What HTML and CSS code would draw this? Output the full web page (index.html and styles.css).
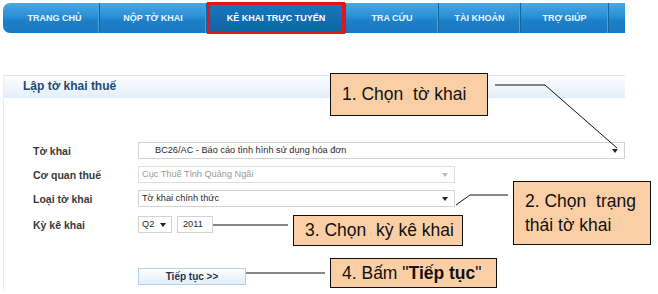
FILE: index.html
```html
<!DOCTYPE html>
<html lang="vi">
<head>
    <meta charset="UTF-8">
    <title>Kê khai trực tuyến</title>
    <link rel="stylesheet" href="styles.css">
</head>
<body>
    <nav class="menu">
        <a class="menu-item home">TRANG CHỦ</a>
        <a class="menu-item submit">NỘP TỜ KHAI</a>
        <a class="menu-item online active">KÊ KHAI TRỰC TUYẾN</a>
        <a class="menu-item search">TRA CỨU</a>
        <a class="menu-item account">TÀI KHOẢN</a>
        <a class="menu-item help">TRỢ GIÚP</a>
        <a class="menu-item tail"></a>
    </nav>

    <section class="panel">
        <h2 class="panel-title">Lập tờ khai thuế</h2>
        <div class="form">
            <div class="row">
                <label>Tờ khai</label>
                <div class="select wide indent">BC26/AC - Báo cáo tình hình sử dụng hóa đơn<span class="arrow"></span></div>
            </div>
            <div class="row">
                <label>Cơ quan thuế</label>
                <div class="select mid disabled">Cục Thuế Tỉnh Quảng Ngãi<span class="arrow"></span></div>
            </div>
            <div class="row">
                <label>Loại tờ khai</label>
                <div class="select mid">Tờ khai chính thức<span class="arrow"></span></div>
            </div>
            <div class="row period">
                <label>Kỳ kê khai</label>
                <div class="select quarter">Q2<span class="arrow"></span></div>
                <div class="year">2011</div>
            </div>
        </div>
        <div class="actions">
            <button class="btn">Tiếp tục &gt;&gt;</button>
        </div>
    </section>

    <!-- chu thich huong dan -->
    <svg class="links" width="658" height="294">
        <polyline points="495,85 545,85 617,148" />
        <polyline points="456,205 470,195 508,195" />
        <line x1="213" y1="225" x2="288" y2="225" />
        <line x1="246" y1="273" x2="325" y2="273" />
    </svg>
    <div class="note note-1">1. Chọn  tờ khai</div>
    <div class="note note-2">2. Chọn  trạng<br>thái tờ khai</div>
    <div class="note note-3">3. Chọn  kỳ kê khai</div>
    <div class="note note-4">4. Bấm "<b>Tiếp tục</b>"</div>
</body>
</html>
```

FILE: styles.css
```css
* {
    box-sizing: border-box;
}

body {
    margin: 0;
    width: 658px;
    height: 294px;
    position: relative;
    background: #fff;
    font-family: "Liberation Sans", Arial, sans-serif;
    overflow: hidden;
}

.menu {
    display: flex;
    margin: 3px 0 0 3px;
    width: 622px;
    height: 30px;
    border-radius: 7px 0 0 7px;
    background: linear-gradient(#4aa7e4, #2a8fd6 45%, #1d7fc7 60%, #1a77bf);
}

.menu-item {
    display: flex;
    align-items: center;
    justify-content: center;
    height: 30px;
    color: #eaf5ff;
    font-size: 9px;
    font-weight: bold;
    border-right: 1px solid #13659f;
    box-shadow: inset -1px 0 0 #4aa0da;
}

.home { width: 97px; padding-left: 7px; }
.submit { width: 107px; }
.online { width: 139px; }
.search { width: 93px; }
.account { width: 82px; }
.help { width: 88px; }
.tail { width: 16px; border-right: 0; box-shadow: none; }

.menu-item.active {
    position: relative;
    background: linear-gradient(#1a78bd, #0d64a6);
    color: #fff;
}

.menu-item.active::after {
    content: "";
    position: absolute;
    top: -1px;
    bottom: -1px;
    left: 0;
    right: 0;
    border: 3px solid #e3141c;
}

.panel {
    margin: 42px 0 0 3px;
    width: 622px;
    height: 216px;
    border-top: 1px solid #e4e4e4;
    border-left: 1px solid #ececec;
}

.panel-title {
    margin: 0;
    height: 22px;
    padding-left: 19px;
    line-height: 21px;
    font-size: 12px;
    font-weight: bold;
    color: #1f4872;
    background: linear-gradient(#fdfeff, #e2eefa);
}

.form {
    padding: 44px 0 0 29px;
}

.row {
    display: flex;
    height: 24px;
    align-items: flex-start;
}

.row.period {
    margin-top: 2px;
}

.row label {
    width: 105px;
    padding-top: 3px;
    font-size: 10.5px;
    font-weight: bold;
    color: #3a3a3a;
}

.select,
.year {
    position: relative;
    height: 17px;
    padding-left: 3px;
    line-height: 15px;
    font-size: 9.2px;
    color: #2a2a2a;
    border: 1px solid #d2d2d2;
    background: #fff;
    white-space: nowrap;
}

.select.wide { width: 487px; }
.select.mid { width: 317px; }
.select.quarter { width: 34px; }
.select.indent { padding-left: 16px; }

.select.disabled {
    color: #9a9a9a;
    border-color: #dedede;
}

.arrow {
    position: absolute;
    right: 6px;
    top: 6px;
    border-left: 3px solid transparent;
    border-right: 3px solid transparent;
    border-top: 4px solid #222;
}

.disabled .arrow {
    border-top-color: #bbb;
}

.quarter .arrow {
    right: 5px;
}

.year {
    width: 36px;
    margin-left: 5px;
    padding-left: 5px;
}

.actions {
    padding: 26px 0 0 134px;
}

.btn {
    width: 108px;
    height: 17px;
    padding: 0;
    font-family: "Liberation Sans", Arial, sans-serif;
    font-size: 10px;
    font-weight: bold;
    color: #1d3553;
    border: 1px solid #b6d2ec;
    background: linear-gradient(#ffffff, #e1edf9);
}

.links {
    position: absolute;
    top: 0;
    left: 0;
    pointer-events: none;
}

.links polyline,
.links line {
    fill: none;
    stroke: #111;
    stroke-width: 1;
}

.note {
    position: absolute;
    display: flex;
    align-items: center;
    padding-left: 11px;
    font-size: 17.5px;
    color: #111;
    white-space: pre;
    background: #fbcfa6;
    border: 1px solid #111;
}

.note-1 { left: 330px; top: 73px; width: 158px; height: 43px; }
.note-2 { left: 513px; top: 181px; width: 138px; height: 64px; line-height: 24px; display: block; padding-top: 7px; }
.note-3 { left: 293px; top: 215px; width: 170px; height: 31px; }
.note-4 { left: 330px; top: 258px; width: 167px; height: 30px; }
```
